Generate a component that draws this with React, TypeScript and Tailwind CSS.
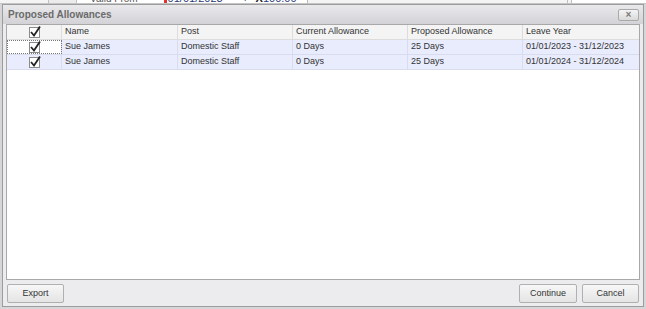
import React from "react";

const cols = [
  { label: "Name", w: "w-[116px]" },
  { label: "Post", w: "w-[115px]" },
  { label: "Current Allowance", w: "w-[115px]" },
  { label: "Proposed Allowance", w: "w-[115px]" },
  { label: "Leave Year", w: "flex-1" },
];

const rows = [
  ["Sue James", "Domestic Staff", "0 Days", "25 Days", "01/01/2023 - 31/12/2023"],
  ["Sue James", "Domestic Staff", "0 Days", "25 Days", "01/01/2024 - 31/12/2024"],
];

function Check() {
  return (
    <div className="w-[11px] h-[11px] border border-[#8a8a8a] bg-white relative">
      <svg width="13" height="13" viewBox="0 0 13 13" className="absolute left-[-1px] top-[-3px]">
        <path d="M2 7 L5 10.5 L11 1.5" stroke="#222" strokeWidth="1.8" fill="none" />
      </svg>
    </div>
  );
}

export default function App() {
  const font = { fontFamily: '"Liberation Sans", Arial, sans-serif' };
  return (
    <div className="w-[646px] h-[309px] bg-[#d6d6d9] flex flex-col overflow-hidden text-[9px] text-[#222]" style={font}>
      <div className="h-[4px] shrink-0 bg-[#f4f4f4] flex overflow-hidden border-b border-[#c4c4c4]">
        <div className="w-[49px] border-r border-[#c0c0c0]" />
        <div className="w-[28px] border-r border-[#c0c0c0] bg-[#ececec]" />
        <div className="w-[231px] bg-white border-r border-[#b8b8b8] flex items-start leading-none">
          <span className="text-[10px] text-[#555] ml-[13px] mt-[-6px]">Valid From</span>
          <span className="w-[3px] h-[3px] bg-[#e03030] mt-[0px] ml-[26px]" />
          <span className="text-[11px] text-[#2a3a7a] ml-[1px] mt-[-7px]">01/01/2023</span>
          <span className="text-[9px] ml-[18px] mt-[-6px]">▼</span>
          <span className="text-[11px] font-bold ml-[6px] mt-[-7px]">X</span>
          <span className="text-[11px] text-[#2a3a7a] mt-[-7px]">100.00</span>
        </div>
        <div className="w-[260px] border-r border-[#c0c0c0]" />
        <div className="w-[4px] border-r border-[#c0c0c0]" />
        <div className="flex-1 bg-white" />
      </div>
      <div className="flex-1 mx-[2px] border border-[#9c9c9c] flex flex-col bg-[#ececee]">
        <div className="h-[19px] bg-gradient-to-b from-[#e9e9ec] to-[#d3d3d7] flex items-center justify-between pl-[5px] pr-[4px]">
          <span className="text-[10px] font-bold text-[#6b6b6b]">Proposed Allowances</span>
          <div className="w-[21px] h-[12px] border border-[#a9a9a9] rounded-[2px] bg-gradient-to-b from-[#f4f4f4] to-[#dadada] flex items-center justify-center text-[10px] font-bold text-[#7a7a7a] leading-none">
            ×
          </div>
        </div>
        <div className="flex-1 mx-[3px] border border-[#a8a8a8] bg-white flex flex-col">
          <div className="flex h-[15px] bg-[#f4f4f4] border-b border-[#dcdcdc]">
            <div className="w-[55px] flex items-center justify-center border-r border-[#dcdcdc]">
              <Check />
            </div>
            {cols.map((c, i) => (
              <div
                key={c.label}
                className={`${c.w} flex items-center pl-[3px] text-[#333] ${i < cols.length - 1 ? "border-r border-[#dcdcdc]" : ""}`}
              >
                {c.label}
              </div>
            ))}
          </div>
          {rows.map((r, ri) => (
            <div key={ri} className="flex h-[15px] bg-[#e8ecfd] border-b border-[#d9dcef]">
              <div
                className={`w-[55px] flex items-center justify-center border-r border-[#d9dcef] ${ri === 0 ? "bg-white outline-1 outline-dotted outline-[#777] -outline-offset-1" : ""}`}
              >
                <Check />
              </div>
              {r.map((v, i) => (
                <div
                  key={i}
                  className={`${cols[i].w} flex items-center pl-[3px] text-[#333] ${i < r.length - 1 ? "border-r border-[#d9dcef]" : ""}`}
                >
                  {v}
                </div>
              ))}
            </div>
          ))}
        </div>
        <div className="h-[26px] flex items-center justify-between px-[4px] pt-[1px]">
          <button className="w-[57px] h-[19px] border border-[#b0b0b0] rounded-[2px] bg-gradient-to-b from-[#f7f7f7] to-[#e4e4e4] text-[9px] text-[#333]">
            Export
          </button>
          <div className="flex gap-[5px]">
            <button className="w-[58px] h-[19px] border border-[#b0b0b0] rounded-[2px] bg-gradient-to-b from-[#f7f7f7] to-[#e4e4e4] text-[9px] text-[#333]">
              Continue
            </button>
            <button className="w-[57px] h-[19px] border border-[#b0b0b0] rounded-[2px] bg-gradient-to-b from-[#f7f7f7] to-[#e4e4e4] text-[9px] text-[#333]">
              Cancel
            </button>
          </div>
        </div>
      </div>
      <div className="h-[2px] shrink-0" />
    </div>
  );
}
